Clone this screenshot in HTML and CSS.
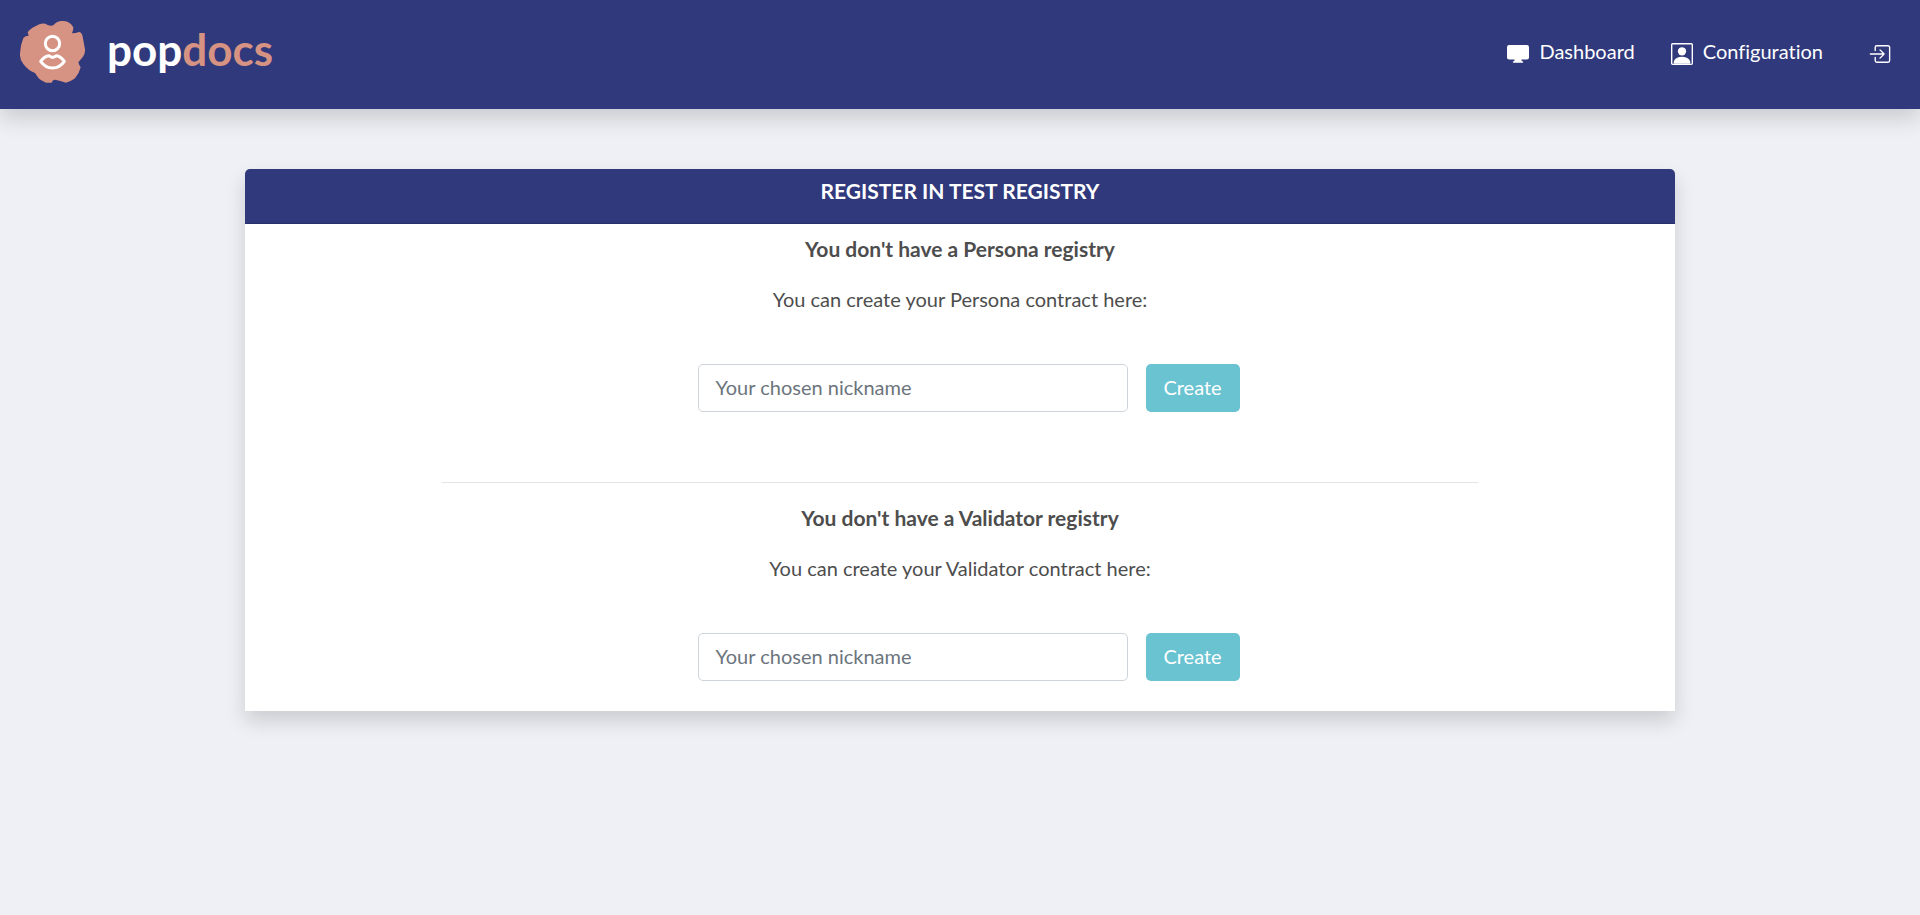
FILE: index.html
```html
<!DOCTYPE html>
<html lang="en">
<head>
<meta charset="utf-8">
<title>popdocs</title>
<meta name="viewport" content="width=device-width, initial-scale=1">
<link rel="stylesheet" href="styles.css">
</head>
<body>
<header class="navbar">
  <a class="brand" href="#">
    <svg class="brand-mark" viewBox="30 33 195 186" aria-hidden="true">
      <path fill="#d69282" d="M56 77L53 67Q62 53 90 42Q103 38 113 45Q122 49 130 46Q140 34 152 33Q178 31 189 50Q192 56 186 70Q200 70 206 66Q213 65 217 75L225 118Q226 130 219 140L205 157Q207 165 212 172Q208 190 195 205Q178 216 168 218Q150 212 135 209Q128 208 125 218L108 218Q92 212 86 205Q80 196 75 189Q55 182 40 162Q29 150 30 130Q31 105 40 84Q46 77 56 77Z"/>
      <g fill="none" stroke="#fff" stroke-width="9" stroke-linejoin="round">
        <circle cx="127.500" cy="100.500" r="21.500"/>
        <path d="M92 154Q103 138 117 137Q128 147 139 137Q152 138 163 154Q149 174 127.500 174Q106 174 92 154Z"/>
      </g>
    </svg>
    <span class="brand-name">pop<span class="brand-accent">docs</span></span>
  </a>
  <nav class="nav-links">
    <a class="nav-link" href="#">
      <svg class="icon" viewBox="0 0 16 16" fill="currentColor" aria-hidden="true"><path d="M1.500 1.500h13A1.500 1.500 0 0 1 16 3v7.500a1.500 1.500 0 0 1-1.500 1.500H10.500c0 .7.200 1.200.500 1.300h.3a.5.5 0 0 1 0 1H4.700a.5.5 0 0 1 0-1H5c.3-.1.500-.6.500-1.300h-4A1.500 1.500 0 0 1 0 10.500V3a1.500 1.500 0 0 1 1.500-1.500z"/></svg>
      Dashboard
    </a>
    <a class="nav-link" href="#">
      <svg class="icon" viewBox="0 0 16 16" fill="currentColor" aria-hidden="true"><rect x=".5" y=".5" width="15" height="15" rx=".7" fill="none" stroke="currentColor"/><circle cx="8" cy="6" r="3"/><path d="M2 15v-1c0-1 1-4 6-4s6 3 6 4v1z"/></svg>
      Configuration
    </a>
    <a class="nav-link nav-exit" href="#" aria-label="Log out">
      <svg class="icon" viewBox="0 0 16 16" fill="none" stroke="currentColor" stroke-linecap="round" stroke-linejoin="round" aria-hidden="true"><path d="M4.500 5.500V3.200A1.200 1.200 0 0 1 5.700 2h8.100A1.200 1.200 0 0 1 15 3.200v9.600a1.200 1.200 0 0 1-1.200 1.200H5.700a1.200 1.200 0 0 1-1.200-1.200v-2.300M1 8h9.500M8 5l3 3-3 3"/></svg>
    </a>
  </nav>
</header>

<main class="card">
  <h1 class="card-header">REGISTER IN TEST REGISTRY</h1>
  <section class="registry">
    <h2 class="registry-title">You don't have a Persona registry</h2>
    <p class="registry-text">You can create your Persona contract here:</p>
    <form class="registry-form">
      <input class="nickname" type="text" placeholder="Your chosen nickname" aria-label="Persona nickname">
      <button class="create" type="button">Create</button>
    </form>
  </section>
  <hr class="divider">
  <section class="registry">
    <h2 class="registry-title">You don't have a Validator registry</h2>
    <p class="registry-text">You can create your Validator contract here:</p>
    <form class="registry-form">
      <input class="nickname" type="text" placeholder="Your chosen nickname" aria-label="Validator nickname">
      <button class="create" type="button">Create</button>
    </form>
  </section>
</main>
</body>
</html>
```
FILE: styles.css
```css
* {
  box-sizing: border-box;
}

body {
  margin: 0;
  background: #eff0f5;
  color: #4d4d4d;
  font-family: Lato, "Open Sans", sans-serif;
  font-size: 20px;
  font-variant-ligatures: none;
  line-height: 30px;
}

.navbar {
  display: flex;
  align-items: center;
  justify-content: space-between;
  padding: 21px 29px 26px 20px;
  background: #30397b;
  box-shadow: 0 10px 20px rgba(0, 0, 0, 0.15);
}

.brand {
  display: flex;
  align-items: center;
  gap: 22px;
  color: #fff;
  text-decoration: none;
}

.brand-mark {
  width: 65px;
  height: 62px;
}

.brand-name {
  padding-bottom: 6px;
  font-size: 44px;
  font-weight: 700;
  line-height: 56px;
}

.brand-accent {
  color: #d69282;
}

.nav-links {
  display: flex;
  align-items: center;
  gap: 36px;
  padding-bottom: 2px;
}

.nav-link {
  display: flex;
  align-items: center;
  gap: 10px;
  color: #fff;
  text-decoration: none;
}

.nav-exit {
  margin-left: 10px;
}

.icon {
  width: 22px;
  height: 22px;
  margin-top: 6px;
}

.card {
  width: 74.5%;
  margin: 60px auto;
  padding-bottom: 30px;
  background: #fff;
  border-radius: 5px 5px 0 0;
  box-shadow: 0 10px 20px rgba(0, 0, 0, 0.15);
}

.card-header {
  margin: 0 0 10px;
  padding: 7px 20px 17px;
  background: #30397b;
  border-bottom: 1px solid #292f6b;
  border-radius: 5px 5px 0 0;
  color: #fff;
  font-size: 21px;
  font-weight: 700;
  text-align: center;
}

.registry {
  text-align: center;
}

.registry-title {
  margin: 0 0 20px;
  font-size: 21px;
  font-weight: 700;
}

.registry-text {
  margin: 0 0 50px;
}

.registry-form {
  display: flex;
  justify-content: center;
  gap: 18px;
}

.nickname {
  width: 30%;
  height: 48px;
  margin-left: 18px;
  padding: 7px 16px 9px;
  border: 1px solid #ced4da;
  border-radius: 5px;
  background: #fff;
  color: #4d4d4d;
  font: inherit;
}

.nickname::placeholder {
  color: #6c757d;
  opacity: 1;
}

.create {
  min-width: 94px;
  height: 48px;
  padding: 8px 16px 10px;
  border: 0;
  border-radius: 5px;
  background: #6ac3d1;
  color: #fff;
  font: inherit;
}

.divider {
  width: 72.4%;
  margin: 70px auto 20px;
  border: 0;
  border-top: 1px solid #e4e4e5;
}
```
